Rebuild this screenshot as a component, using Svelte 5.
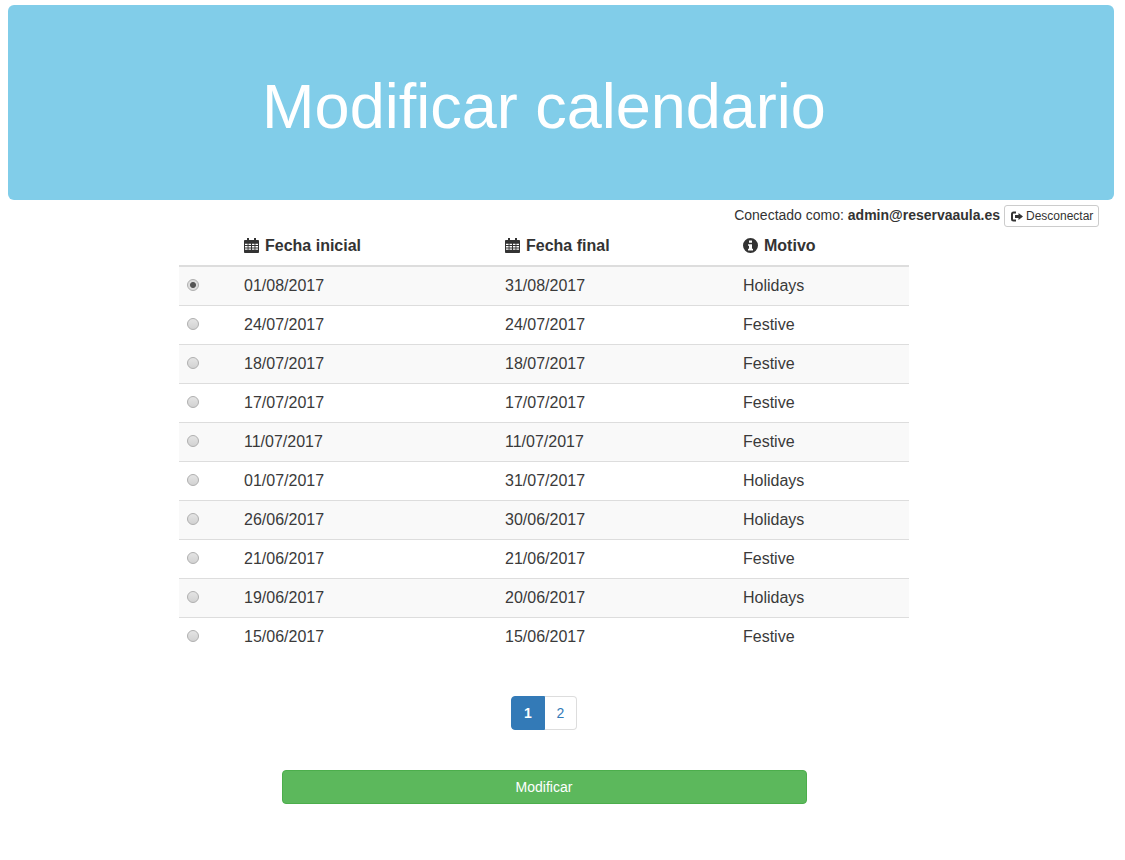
<script>
  const rows = [
    ['01/08/2017', '31/08/2017', 'Holidays'],
    ['24/07/2017', '24/07/2017', 'Festive'],
    ['18/07/2017', '18/07/2017', 'Festive'],
    ['17/07/2017', '17/07/2017', 'Festive'],
    ['11/07/2017', '11/07/2017', 'Festive'],
    ['01/07/2017', '31/07/2017', 'Holidays'],
    ['26/06/2017', '30/06/2017', 'Holidays'],
    ['21/06/2017', '21/06/2017', 'Festive'],
    ['19/06/2017', '20/06/2017', 'Holidays'],
    ['15/06/2017', '15/06/2017', 'Festive'],
  ]

  let selected = $state(0)
  let page = $state(1)
</script>

{#snippet calendar()}
  <svg class="icon" viewBox="0 0 15 15" aria-hidden="true">
    <path fill="#333" fill-rule="evenodd" d="M3 0h2v2h5V0h2v2h2.200c.4 0 .8.4.8.8v11.400c0 .4-.4.8-.8.8H.8c-.4 0-.8-.4-.8-.8V2.800c0-.4.4-.8.800-.8H3zM1 5.700v1.300h2.600V5.700zm3.500 0v1.300h2.500V5.700zm3.500 0v1.300h2.500V5.700zm3.400 0v1.300H14V5.700zM1 8.100v1.300h2.600V8.100zm3.500 0v1.300h2.500V8.100zm3.500 0v1.300h2.500V8.100zm3.400 0v1.300H14V8.100zM1 10.500v1.300h2.600v-1.300zm3.500 0v1.300h2.500v-1.300zm3.500 0v1.300h2.500v-1.300zm3.400 0v1.300H14v-1.300z"/>
  </svg>
{/snippet}

<header class="banner">
  <h1>Modificar calendario</h1>
</header>

<div class="session">
  <span>Conectado como: <b>admin@reservaaula.es</b></span>
  <button class="logout">
    <svg class="logout-icon" viewBox="0 0 12 10" aria-hidden="true">
      <path fill="none" stroke="#333" stroke-width="2" d="M5 1H2.500C1.600 1 1 1.600 1 2.500v5C1 8.400 1.600 9 2.500 9H5"/>
      <path fill="#333" d="M4 3.500h3.500V1.500L12 5 7.500 8.500V6.500H4z"/>
    </svg>
    Desconectar
  </button>
</div>

<main class="content">
  <table>
    <colgroup>
      <col class="col-radio" />
      <col class="col-start" />
      <col class="col-end" />
      <col />
    </colgroup>
    <thead>
      <tr>
        <th></th>
        <th><span class="head">{@render calendar()} Fecha inicial</span></th>
        <th><span class="head">{@render calendar()} Fecha final</span></th>
        <th>
          <span class="head">
            <svg class="icon" viewBox="0 0 15 15" aria-hidden="true">
              <path fill="#333" fill-rule="evenodd" d="M7.500 0a7.500 7.500 0 1 1 0 15 7.500 7.500 0 0 1 0-15zM6 2.500v2.300h3V2.500zM5 6.200v1.600h1v3H5v1.700h5v-1.700H9V6.200z"/>
            </svg>
            Motivo
          </span>
        </th>
      </tr>
    </thead>
    <tbody>
      {#each rows as row, i}
        <tr>
          <td><input type="radio" name="fecha" checked={selected === i} onchange={() => (selected = i)} /></td>
          <td>{row[0]}</td>
          <td>{row[1]}</td>
          <td>{row[2]}</td>
        </tr>
      {/each}
    </tbody>
  </table>

  <nav class="pagination">
    <button class:active={page === 1} onclick={() => (page = 1)}>1</button>
    <button class:active={page === 2} onclick={() => (page = 2)}>2</button>
  </nav>

  <button class="submit">Modificar</button>
</main>

<style>
  :global(body) {
    font-family: "Liberation Sans", Arial, sans-serif;
    color: #333;
    background: #fff;
  }

  .banner {
    margin: 5px 11px 0 8px;
    height: 195px;
    display: flex;
    align-items: center;
    justify-content: center;
    padding-top: 8px;
    padding-right: 34px;
    box-sizing: border-box;
    background: #81cde9;
    border-radius: 6px;
  }

  h1 {
    margin: 0;
    font-size: 63px;
    font-weight: 400;
    line-height: 1.1;
    color: #fff;
  }

  .session {
    display: flex;
    justify-content: flex-end;
    align-items: center;
    gap: 4px;
    height: 22px;
    margin-top: 5px;
    padding-right: 26px;
    font-size: 14px;
    color: #333;
  }

  .session span {
    position: relative;
    top: -1px;
  }

  .logout {
    display: flex;
    align-items: center;
    gap: 3px;
    width: 95px;
    height: 22px;
    padding: 0 0 0 6px;
    border: 1px solid #ccc;
    border-radius: 3px;
    background: #fff;
    font: inherit;
    font-size: 12px;
    color: #333;
  }

  .logout-icon {
    width: 12px;
    height: 11px;
  }

  .content {
    width: 1088px;
    display: flex;
    flex-direction: column;
    align-items: center;
  }

  table {
    width: 730px;
    table-layout: fixed;
    border-collapse: collapse;
    font-size: 16px;
    color: #3a3a3a;
  }

  .col-radio { width: 57px; }
  .col-start { width: 261px; }
  .col-end { width: 238px; }

  th {
    height: 38px;
    padding: 8px;
    box-sizing: border-box;
    border-bottom: 2px solid #ddd;
    text-align: left;
    font-weight: 700;
    line-height: 22px;
    color: #333;
  }

  .head {
    display: flex;
    align-items: center;
    gap: 6px;
  }

  td {
    padding: 8px;
    border-top: 1px solid #ddd;
    line-height: 22px;
  }

  tbody tr:first-child td {
    border-top: 0;
  }

  tbody tr:nth-child(odd) {
    background: #f9f9f9;
  }

  .icon {
    flex: none;
    width: 15px;
    height: 15px;
    margin-top: -2px;
  }

  input[type="radio"] {
    display: block;
    appearance: none;
    box-sizing: border-box;
    width: 12px;
    height: 12px;
    margin: 0;
    position: relative;
    top: -1px;
    border: 1px solid #b0b0b0;
    border-radius: 50%;
    background: linear-gradient(#e4e4e4, #d2d2d2);
  }

  input[type="radio"]:checked {
    background: radial-gradient(circle, #555 0 2.500px, #ddd 3.500px);
  }

  .pagination {
    display: flex;
    margin-top: 40px;
  }

  .pagination button {
    width: 32px;
    height: 34px;
    padding: 0;
    border: 1px solid #ddd;
    background: #fff;
    font: inherit;
    font-size: 14px;
    color: #337ab7;
  }

  .pagination button:first-child {
    width: 34px;
    border-radius: 4px 0 0 4px;
  }

  .pagination button:last-child {
    border-left: 0;
    border-radius: 0 4px 4px 0;
  }

  .pagination button.active {
    border-color: #337ab7;
    background: #337ab7;
    color: #fff;
    font-weight: 700;
  }

  .submit {
    width: 525px;
    height: 34px;
    margin-top: 40px;
    border: 1px solid #4cae4c;
    border-radius: 4px;
    background: #5cb85c;
    font: inherit;
    font-size: 14px;
    color: #fff;
  }
</style>
